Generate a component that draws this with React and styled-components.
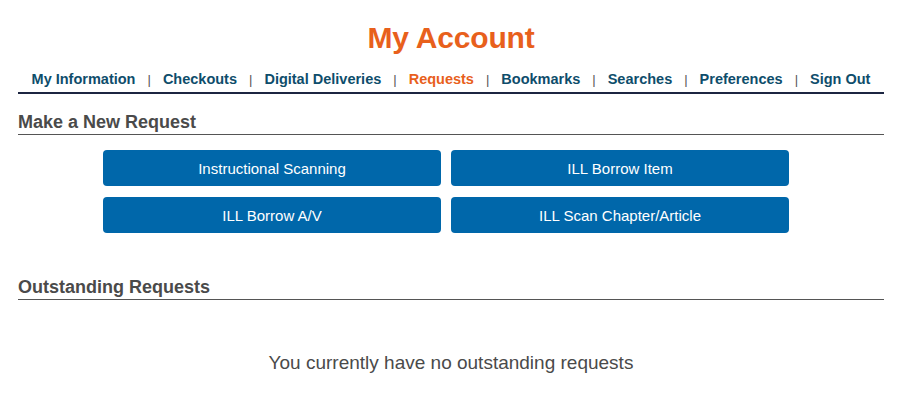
import React from "react";
import styled, { createGlobalStyle } from "styled-components";

const Global = createGlobalStyle`
  html, body { margin: 0; padding: 0; background: #fff; }
  body { font-family: "Liberation Sans", Arial, sans-serif; }
`;

const Page = styled.div`
  padding: 0 36px 0 18px;
  display: flex;
  flex-direction: column;
`;

const Title = styled.h1`
  margin: 0;
  padding-top: 19px;
  text-align: center;
  color: #e8601c;
  font-size: 30px;
  line-height: 38px;
  font-weight: 700;
  letter-spacing: -0.2px;
`;

const Nav = styled.nav`
  display: flex;
  justify-content: center;
  align-items: center;
  margin-top: 13px;
  padding-bottom: 4px;
  border-bottom: 2px solid #1c2541;
  font-size: 14.5px;
  font-weight: 700;
`;

const NavLink = styled.a`
  color: ${(p) => (p.$active ? "#e8601c" : "#0e4d6b")};
  text-decoration: none;
  line-height: 18px;
`;

const Sep = styled.span`
  color: #555;
  font-weight: 400;
  font-size: 13px;
  margin: 0 12px;
`;

const SectionHeading = styled.h2`
  margin: ${(p) => p.$top}px 0 0;
  padding-bottom: 1px;
  border-bottom: 1px solid #555;
  color: #4a4a4a;
  font-size: 18px;
  line-height: 21px;
  font-weight: 700;
`;

const ButtonGrid = styled.div`
  display: grid;
  grid-template-columns: 338px 338px;
  column-gap: 10px;
  row-gap: 11px;
  justify-content: center;
  margin: 15px 10px 0 0;
`;

const ReqButton = styled.button`
  height: 36px;
  border: none;
  border-radius: 4px;
  background: #0067aa;
  color: #fff;
  font-family: "Liberation Sans", Arial, sans-serif;
  font-size: 15px;
  cursor: pointer;
`;

const Empty = styled.p`
  margin: 51px 0 0;
  text-align: center;
  color: #4a4a4a;
  font-size: 19px;
  line-height: 24px;
`;

const links = [
  "My Information",
  "Checkouts",
  "Digital Deliveries",
  "Requests",
  "Bookmarks",
  "Searches",
  "Preferences",
  "Sign Out",
];

const buttons = [
  "Instructional Scanning",
  "ILL Borrow Item",
  "ILL Borrow A/V",
  "ILL Scan Chapter/Article",
];

export default function App() {
  return (
    <>
      <Global />
      <Page>
        <Title>My Account</Title>
        <Nav>
          {links.map((l, i) => (
            <React.Fragment key={l}>
              {i > 0 && <Sep>|</Sep>}
              <NavLink href="#" $active={l === "Requests"}>
                {l}
              </NavLink>
            </React.Fragment>
          ))}
        </Nav>
        <SectionHeading $top={18}>Make a New Request</SectionHeading>
        <ButtonGrid>
          {buttons.map((b) => (
            <ReqButton key={b}>{b}</ReqButton>
          ))}
        </ButtonGrid>
        <SectionHeading $top={44}>Outstanding Requests</SectionHeading>
        <Empty>You currently have no outstanding requests</Empty>
      </Page>
    </>
  );
}
